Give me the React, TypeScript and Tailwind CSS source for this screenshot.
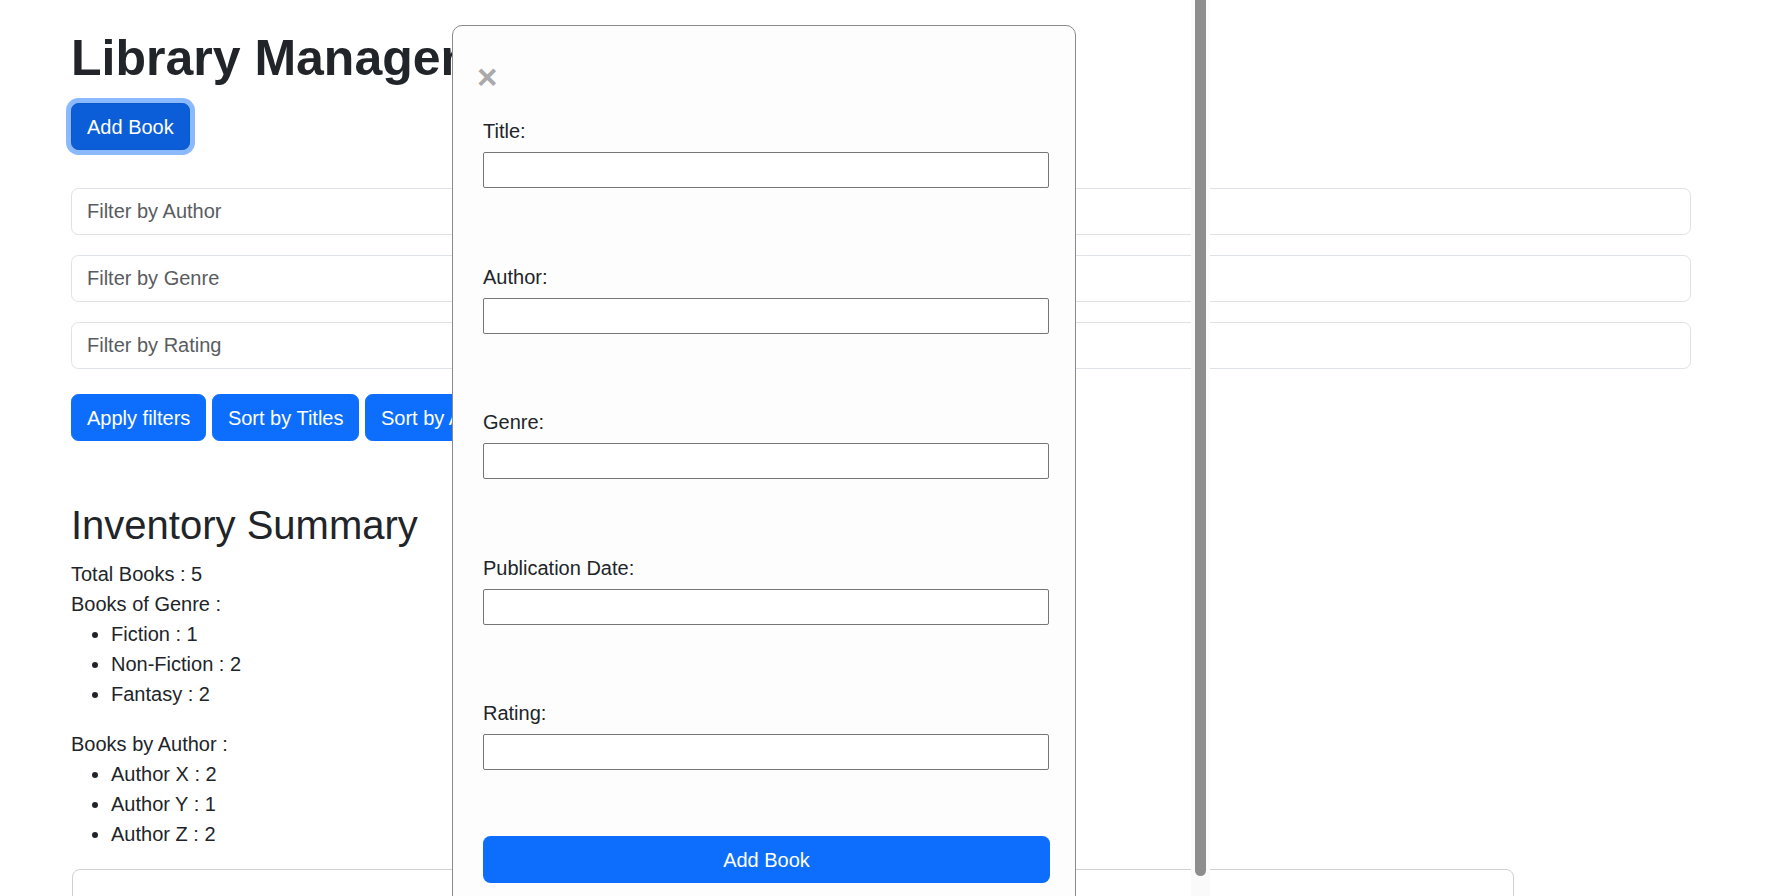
const genres = [
  { name: 'Fiction', count: 1 },
  { name: 'Non-Fiction', count: 2 },
  { name: 'Fantasy', count: 2 },
];

const authors = [
  { name: 'Author X', count: 2 },
  { name: 'Author Y', count: 1 },
  { name: 'Author Z', count: 2 },
];

const filters = ['Filter by Author', 'Filter by Genre', 'Filter by Rating'];

const fields = ['Title:', 'Author:', 'Genre:', 'Publication Date:', 'Rating:'];

function AddBookModal() {
  return (
    <div className="absolute left-[452px] top-[25px] w-[624px] h-[900px] bg-[#fdfdfd] border border-[#8a8a8a] rounded-[10px] pl-[30px] pt-[30px]">
      {/* Close */}
      <div className="h-[42px] leading-[42px] text-[35px] font-bold text-[#aaaaaa] mb-[18px] ml-[-6px] cursor-pointer select-none">
        ×
      </div>

      {/* Fields */}
      <div className="flex flex-col w-[567px]">
        {fields.map((f, i) => (
          <div key={f} className={i < fields.length - 1 ? 'mb-[73.5px]' : ''}>
            <label className="block leading-[30px] mb-[6px]">{f}</label>
            <input type="text" className="block w-[566px] h-[36px] bg-white border border-[#767676] rounded-[2px] outline-none" />
          </div>
        ))}
      </div>

      <button className="mt-[66px] w-[567px] h-[47px] bg-[#0d6efd] text-white rounded-[7.5px] leading-[30px]">
        Add Book
      </button>
    </div>
  );
}

function ScrollTrack() {
  return (
    <div className="absolute left-[1191px] top-0 w-[19px] h-[896px] bg-[#fafafa] overflow-hidden">
      <div className="ml-[4px] mt-[-12px] w-[11px] h-[888px] bg-[#8d8d8d] rounded-full" />
    </div>
  );
}

export default function App() {
  return (
    <div className="relative h-[896px] overflow-hidden bg-white font-['Liberation_Sans',Arial,sans-serif] text-[20px] leading-[30px] text-[#212529]">
      <div className="pl-[71px] pt-[28px] w-[1691px]">
        <h1 className="text-[50px] leading-[60px] font-bold whitespace-nowrap">Library Management System</h1>

        <button className="mt-[15px] h-[47px] px-[15px] bg-[#0b5ed7] text-white border border-[#0a58ca] rounded-[7.5px] ring-[5px] ring-[#8bb9fe]">
          Add Book
        </button>

        {/* Filters */}
        <div className="mt-[38px] flex flex-col gap-[20px]">
          {filters.map((p) => (
            <input
              key={p}
              placeholder={p}
              className="w-full h-[47px] px-[15px] bg-white border border-[#dee2e6] rounded-[7.5px] placeholder:text-[#595c5f] outline-none"
            />
          ))}
        </div>

        <div className="mt-[25px] flex gap-[5.5px]">
          <button className="h-[47px] px-[15px] bg-[#0d6efd] text-white border border-[#0d6efd] rounded-[7.5px]">Apply filters</button>
          <button className="h-[47px] px-[15px] bg-[#0d6efd] text-white border border-[#0d6efd] rounded-[7.5px]">Sort by Titles</button>
          <button className="h-[47px] px-[15px] bg-[#0d6efd] text-white border border-[#0d6efd] rounded-[7.5px]">Sort by Author</button>
        </div>

        {/* Summary */}
        <h2 className="mt-[60px] mb-[10px] text-[40px] leading-[48px] font-normal">Inventory Summary</h2>
        <div>Total Books : 5</div>
        <div>Books of Genre :</div>
        <ul className="list-disc pl-[40px] mb-[20px]">
          {genres.map((g) => (
            <li key={g.name}>
              {g.name} : {g.count}
            </li>
          ))}
        </ul>
        <div>Books by Author :</div>
        <ul className="list-disc pl-[40px] mb-[20px]">
          {authors.map((a) => (
            <li key={a.name}>
              {a.name} : {a.count}
            </li>
          ))}
        </ul>

        <div className="mt-[1px] ml-[1px] w-[1442px] h-[120px] border border-[#d0d0d0] rounded-[8px]" />
      </div>

      <AddBookModal />
      <ScrollTrack />
    </div>
  );
}
